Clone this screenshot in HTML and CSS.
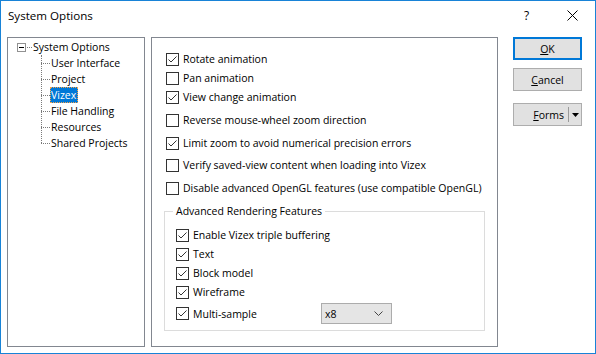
FILE: index.html
```html
<!DOCTYPE html>
<html>
<head>
<meta charset="utf-8">
<link rel="stylesheet" href="styles.css">
</head>
<body>
<div class="window">
  <div class="titlebar">
    <span class="title">System Options</span>
    <span class="help">?</span>
    <svg class="close" width="11" height="11" viewBox="0 0 11 11"><path d="M0.5 0.5 L10.5 10.5 M10.5 0.5 L0.5 10.5" stroke="#000" stroke-width="1"/></svg>
  </div>
  <div class="body">
    <div class="tree">
      <div class="node root"><span class="exp"><span class="minus"></span></span><span class="rdots"></span><span class="label">System Options</span></div>
      <div class="children">
        <div class="node child"><span class="label">User Interface</span></div>
        <div class="node child"><span class="label">Project</span></div>
        <div class="node child"><span class="label selected">Vizex</span></div>
        <div class="node child"><span class="label">File Handling</span></div>
        <div class="node child"><span class="label">Resources</span></div>
        <div class="node child last"><span class="label">Shared Projects</span></div>
      </div>
    </div>
    <div class="options">
      <div class="check r-rotate"><span class="box"><svg width="11" height="11" viewBox="0 0 11 11"><path d="M1.5 5.5 L4 8 L9.5 2.5" fill="none" stroke="#333" stroke-width="1"/></svg></span><span>Rotate animation</span></div>
      <div class="check r-pan"><span class="box"></span><span>Pan animation</span></div>
      <div class="check r-view"><span class="box"><svg width="11" height="11" viewBox="0 0 11 11"><path d="M1.5 5.5 L4 8 L9.5 2.5" fill="none" stroke="#333" stroke-width="1"/></svg></span><span>View change animation</span></div>
      <div class="check r-wide"><span class="box"></span><span>Reverse mouse-wheel zoom direction</span></div>
      <div class="check r-wide"><span class="box"><svg width="11" height="11" viewBox="0 0 11 11"><path d="M1.5 5.5 L4 8 L9.5 2.5" fill="none" stroke="#333" stroke-width="1"/></svg></span><span>Limit zoom to avoid numerical precision errors</span></div>
      <div class="check r-wide2"><span class="box"></span><span>Verify saved-view content when loading into Vizex</span></div>
      <div class="check r-wide3"><span class="box"></span><span>Disable advanced OpenGL features (use compatible OpenGL)</span></div>
      <fieldset class="group">
        <legend>Advanced Rendering Features</legend>
        <div class="check g-first"><span class="box"><svg width="11" height="11" viewBox="0 0 11 11"><path d="M1.5 5.5 L4 8 L9.5 2.5" fill="none" stroke="#333" stroke-width="1"/></svg></span><span>Enable Vizex triple buffering</span></div>
        <div class="check g-row"><span class="box"><svg width="11" height="11" viewBox="0 0 11 11"><path d="M1.5 5.5 L4 8 L9.5 2.5" fill="none" stroke="#333" stroke-width="1"/></svg></span><span>Text</span></div>
        <div class="check g-row"><span class="box"><svg width="11" height="11" viewBox="0 0 11 11"><path d="M1.5 5.5 L4 8 L9.5 2.5" fill="none" stroke="#333" stroke-width="1"/></svg></span><span>Block model</span></div>
        <div class="check g-row"><span class="box"><svg width="11" height="11" viewBox="0 0 11 11"><path d="M1.5 5.5 L4 8 L9.5 2.5" fill="none" stroke="#333" stroke-width="1"/></svg></span><span>Wireframe</span></div>
        <div class="check g-multi"><span class="box"><svg width="11" height="11" viewBox="0 0 11 11"><path d="M1.5 5.5 L4 8 L9.5 2.5" fill="none" stroke="#333" stroke-width="1"/></svg></span><span class="multi-label">Multi-sample</span>
          <div class="combo"><span>x8</span><svg width="9" height="5" viewBox="0 0 9 5"><path d="M0.5 0.5 L4.5 4.5 L8.5 0.5" fill="none" stroke="#444" stroke-width="1"/></svg></div>
        </div>
      </fieldset>
    </div>
    <div class="buttons">
      <div class="btn default"><span><u>O</u>K</span></div>
      <div class="btn"><span><u>C</u>ancel</span></div>
      <div class="btn split"><span class="split-label"><u>F</u>orms</span><span class="sep"></span><svg width="7" height="4" viewBox="0 0 7 4"><path d="M0 0 H7 L3.5 4 Z" fill="#000"/></svg></div>
    </div>
  </div>
</div>
</body>
</html>
```
FILE: styles.css
```css
* { box-sizing: border-box; }
html, body { margin: 0; padding: 0; background: #fff; }
body {
  font-family: "Open Sans", "Liberation Sans", sans-serif;
  font-size: 10.5px;
  color: #000;
}
.window {
  width: 596px;
  height: 354px;
  border: 1px solid #1883d7;
  background: #fff;
  display: flex;
  flex-direction: column;
}
.titlebar {
  height: 30px;
  display: flex;
  align-items: center;
  padding-left: 7px;
  padding-bottom: 1px;
  flex: none;
}
.title { font-size: 11.6px; }
.help { margin-left: auto; width: 8px; font-size: 12px; }
.close { margin-left: 35px; margin-right: 17px; display: block; }

.body {
  display: flex;
  padding: 6px 13px 0 6px;
  flex: none;
}
.tree {
  width: 138px;
  height: 310px;
  border: 1px solid #828790;
  padding: 1px 0 0 8px;
}
.node {
  height: 16px;
  display: flex;
  align-items: center;
  white-space: nowrap;
}
.exp {
  width: 9px;
  height: 9px;
  border: 1px solid #919191;
  display: flex;
  align-items: center;
  justify-content: center;
  margin-left: 1px;
}
.minus { width: 5px; height: 1px; background: #000; }
.rdots {
  width: 5px;
  height: 0;
  border-top: 1px dotted #7a7a7a;
  margin: 0 1px 0 1px;
}
.children {
  position: relative;
  padding-left: 25px;
}
.children::before {
  content: "";
  position: absolute;
  left: 25px;
  top: 0;
  bottom: 8px;
  border-left: 1px dotted #7a7a7a;
}
.child { position: relative; }
.child::before {
  content: "";
  position: absolute;
  left: 0;
  width: 9px;
  top: 8px;
  border-top: 1px dotted #7a7a7a;
}
.child .label {
  margin-left: 9px;
  padding: 0 1px 0 1px;
  height: 16px;
  line-height: 16px;
}
.child .label.selected {
  background: #0078d7;
  color: #fff;
  outline: 1px dotted #f7a34a;
  outline-offset: -1px;
  padding: 0 2px 0 1px;
}

.options {
  width: 347px;
  height: 310px;
  border: 1px solid #828790;
  margin-left: 6px;
  padding: 13px 0 0 14px;
}
.check {
  display: flex;
  align-items: center;
  height: 16px;
  white-space: nowrap;
}
.box {
  width: 13px;
  height: 13px;
  border: 1px solid #333;
  background: #fff;
  margin-right: 4px;
  flex: none;
  display: block;
}
.box svg { display: block; }
.r-pan, .r-view { margin-top: 3px; }
.r-wide { margin-top: 7px; }
.r-wide2 { margin-top: 6px; }
.r-wide3 { margin-top: 7px; }

.group {
  margin: 7px 0 0 -2px;
  width: 321px;
  padding: 0 0 6px 0;
  border: 1px solid #dcdcdc;
  min-width: 0;
}
.group legend {
  margin-left: 8px;
  padding: 0 3px;
  height: 16px;
  line-height: 16px;
  color: #000;
}
.group .check { margin-left: 11px; }
.g-first { margin-top: 8px; }
.g-row { margin-top: 3px; }
.g-multi { margin-top: 3px; height: 21px; }
.multi-label { width: 128px; }
.combo {
  width: 71px;
  height: 21px;
  background: #e5e5e5;
  border: 1px solid #acacac;
  display: flex;
  align-items: center;
  padding: 0 8px 0 3px;
  justify-content: space-between;
}

.buttons {
  margin-left: 15px;
  width: 69px;
  display: flex;
  flex-direction: column;
}
.btn {
  height: 23px;
  background: #e1e1e1;
  border: 1px solid #adadad;
  display: flex;
  align-items: center;
  justify-content: center;
  margin-bottom: 8px;
}
.btn u { text-decoration: underline; text-underline-offset: 1px; }
.btn.default { border: 2px solid #0078d7; }
.btn.split {
  margin-top: 4px;
  justify-content: flex-end;
  padding-right: 2px;
}
.split-label { margin-right: 4px; }
.sep { width: 1px; height: 15px; background: #9a9a9a; margin-right: 3px; }
.btn.split svg { display: block; }
```
